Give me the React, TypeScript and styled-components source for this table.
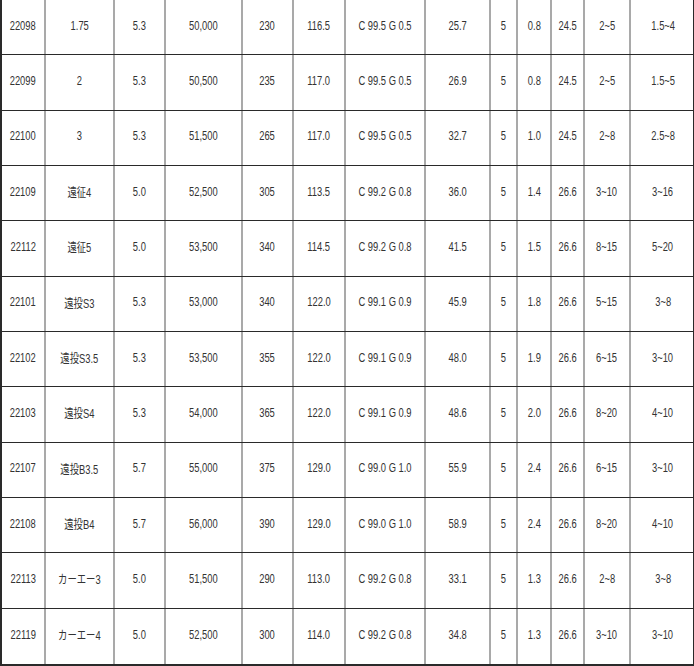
import styled, { createGlobalStyle } from "styled-components";

const GlobalStyle = createGlobalStyle`
  html, body {
    margin: 0;
    padding: 0;
    background: #ffffff;
  }
`;

const columns = [44, 69, 51, 77, 51, 52, 80, 65, 27, 34, 33, 46, 64];

const rows: string[][] = [
  ["22098", "1.75", "5.3", "50,000", "230", "116.5", "C 99.5 G 0.5", "25.7", "5", "0.8", "24.5", "2~5", "1.5~4"],
  ["22099", "2", "5.3", "50,500", "235", "117.0", "C 99.5 G 0.5", "26.9", "5", "0.8", "24.5", "2~5", "1.5~5"],
  ["22100", "3", "5.3", "51,500", "265", "117.0", "C 99.5 G 0.5", "32.7", "5", "1.0", "24.5", "2~8", "2.5~8"],
  ["22109", "遠征4", "5.0", "52,500", "305", "113.5", "C 99.2 G 0.8", "36.0", "5", "1.4", "26.6", "3~10", "3~16"],
  ["22112", "遠征5", "5.0", "53,500", "340", "114.5", "C 99.2 G 0.8", "41.5", "5", "1.5", "26.6", "8~15", "5~20"],
  ["22101", "遠投S3", "5.3", "53,000", "340", "122.0", "C 99.1 G 0.9", "45.9", "5", "1.8", "26.6", "5~15", "3~8"],
  ["22102", "遠投S3.5", "5.3", "53,500", "355", "122.0", "C 99.1 G 0.9", "48.0", "5", "1.9", "26.6", "6~15", "3~10"],
  ["22103", "遠投S4", "5.3", "54,000", "365", "122.0", "C 99.1 G 0.9", "48.6", "5", "2.0", "26.6", "8~20", "4~10"],
  ["22107", "遠投B3.5", "5.7", "55,000", "375", "129.0", "C 99.0 G 1.0", "55.9", "5", "2.4", "26.6", "6~15", "3~10"],
  ["22108", "遠投B4", "5.7", "56,000", "390", "129.0", "C 99.0 G 1.0", "58.9", "5", "2.4", "26.6", "8~20", "4~10"],
  ["22113", "カーエー3", "5.0", "51,500", "290", "113.0", "C 99.2 G 0.8", "33.1", "5", "1.3", "26.6", "2~8", "3~8"],
  ["22119", "カーエー4", "5.0", "52,500", "300", "114.0", "C 99.2 G 0.8", "34.8", "5", "1.3", "26.6", "3~10", "3~10"],
];

const Table = styled.div`
  width: 694px;
  height: 666px;
  box-sizing: border-box;
  display: grid;
  grid-template-rows: repeat(12, 1fr);
  border-left: 2px solid #2a2a2a;
  border-right: 1px solid #2a2a2a;
  border-bottom: 2px solid #2a2a2a;
  font-family: "Liberation Sans", "Noto Sans CJK JP", sans-serif;
  font-size: 12px;
  color: #333333;
`;

const Row = styled.div<{ $last: boolean }>`
  display: grid;
  grid-template-columns: ${columns.map((w) => `${w}px`).join(" ")};
  border-bottom: ${({ $last }) => ($last ? "none" : "1px solid #2a2a2a")};
`;

const Cell = styled.div<{ $last: boolean }>`
  display: flex;
  align-items: center;
  justify-content: center;
  padding-bottom: 3px;
  white-space: nowrap;
  overflow: hidden;
  border-right: ${({ $last }) => ($last ? "none" : "2px solid #a9a9a9")};
`;

const Text = styled.span`
  display: inline-block;
  transform: scaleX(0.78);
`;

export default function App() {
  return (
    <>
      <GlobalStyle />
      <Table>
        {rows.map((row, r) => (
          <Row key={r} $last={r === rows.length - 1}>
            {row.map((value, c) => (
              <Cell key={c} $last={c === row.length - 1}>
                <Text>{value}</Text>
              </Cell>
            ))}
          </Row>
        ))}
      </Table>
    </>
  );
}
